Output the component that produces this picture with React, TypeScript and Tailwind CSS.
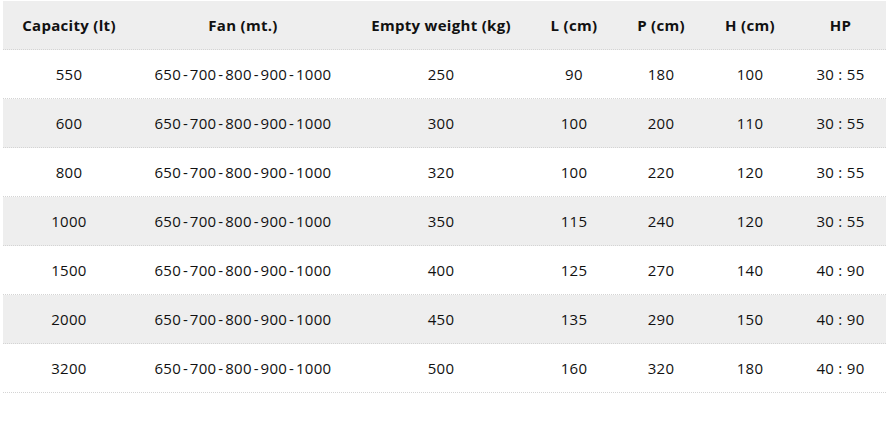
import React from "react";

const headers = ["Capacity (lt)", "Fan (mt.)", "Empty weight (kg)", "L (cm)", "P (cm)", "H (cm)", "HP"];
const rows = [
  ["550", "650-700-800-900-1000", "250", "90", "180", "100", "30 : 55"],
  ["600", "650-700-800-900-1000", "300", "100", "200", "110", "30 : 55"],
  ["800", "650-700-800-900-1000", "320", "100", "220", "120", "30 : 55"],
  ["1000", "650-700-800-900-1000", "350", "115", "240", "120", "30 : 55"],
  ["1500", "650-700-800-900-1000", "400", "125", "270", "140", "40 : 90"],
  ["2000", "650-700-800-900-1000", "450", "135", "290", "150", "40 : 90"],
  ["3200", "650-700-800-900-1000", "500", "160", "320", "180", "40 : 90"],
];

const cols = "grid grid-cols-[132px_216px_180px_86px_88px_90px_91px]";

function Fan({ text }: { text: string }) {
  const parts = text.split("-");
  return (
    <span>
      {parts.map((p, i) => (
        <React.Fragment key={i}>
          {i > 0 && <span className="px-[1.8px]">-</span>}
          {p}
        </React.Fragment>
      ))}
    </span>
  );
}

export default function App() {
  return (
    <div className="w-[889px] h-[421px] bg-white pt-[1px] pl-[3px] text-[#111] text-[15px] tracking-[0.3px]" style={{ fontFamily: '"Open Sans", "Noto Sans", sans-serif' }}>
      <div className="w-[883px]">
        <div className={`${cols} h-[49px] bg-[#eeeeee] border-b border-dotted border-[#d4d4d4] font-bold`}>
          {headers.map((h) => (
            <div key={h} className="flex items-center justify-center">{h}</div>
          ))}
        </div>
        {rows.map((r, i) => (
          <div key={i} className={`${cols} h-[49px] border-b border-dotted border-[#d4d4d4] ${i % 2 === 1 ? "bg-[#eeeeee]" : "bg-white"}`}>
            {r.map((c, j) => (
              <div key={j} className="flex items-center justify-center">
                {j === 1 ? <Fan text={c} /> : c}
              </div>
            ))}
          </div>
        ))}
      </div>
    </div>
  );
}
